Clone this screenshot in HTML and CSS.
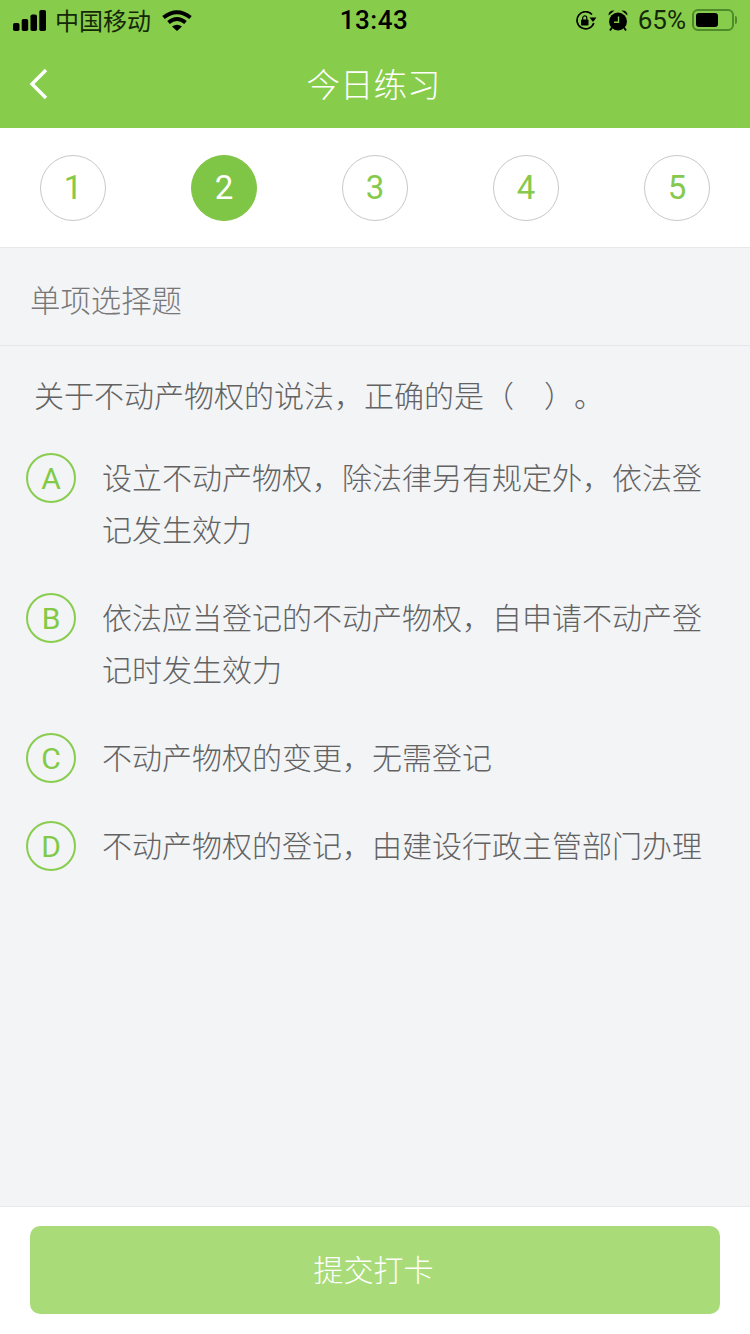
FILE: index.html
```html
<!DOCTYPE html>
<html lang="zh-CN">
<head>
    <meta charset="UTF-8">
    <meta name="viewport" content="width=device-width, initial-scale=1.0">
    <title>今日练习</title>
    <link rel="stylesheet" href="styles.css">
</head>
<body>
    <header class="top">
        <div class="status-bar">
            <div class="status-left">
                <svg class="signal" width="33" height="21" viewBox="0 0 33 21">
                    <rect x="0" y="13" width="6.500" height="8" rx="1.800"/>
                    <rect x="8.700" y="9" width="6.500" height="12" rx="1.800"/>
                    <rect x="17.500" y="4.500" width="6.500" height="16.500" rx="1.800"/>
                    <rect x="26.300" y="0" width="6.700" height="21" rx="1.800"/>
                </svg>
                <span class="carrier">中国移动</span>
                <svg class="wifi" width="30" height="21" viewBox="0 0 30 21">
                    <path d="M1.500 7.500 Q15 -3 28.500 7.500" fill="none" stroke="#000" stroke-width="4"/>
                    <path d="M6.500 12.500 Q15 5.500 23.500 12.500" fill="none" stroke="#000" stroke-width="4"/>
                    <path d="M10 16.500 Q15 13 20 16.500 L15 21 Z"/>
                </svg>
            </div>
            <div class="status-time">13:43</div>
            <div class="status-right">
                <svg class="lock" width="22" height="20" viewBox="0 0 22 20">
                    <path d="M17 3.500 A8.600 8.600 0 1 0 18.800 12" fill="none" stroke="#000" stroke-width="1.700"/>
                    <path d="M14.500 6.500 L21.500 6.500 L18 11 Z"/>
                    <rect x="6" y="8.500" width="7.500" height="6" rx="1"/>
                    <path d="M7.700 9 V7 A2 2 0 0 1 11.800 7 V9" fill="none" stroke="#000" stroke-width="1.200"/>
                </svg>
                <svg class="alarm" width="20" height="21" viewBox="0 0 20 21">
                    <circle cx="10" cy="11.500" r="9"/>
                    <path d="M0.500 5.500 Q0.500 0.200 6.500 0.500 Z M19.500 5.500 Q19.500 0.200 13.500 0.500 Z"/>
                    <path d="M4 17.500 L2 20.500 M16 17.500 L18 20.500" stroke="#000" stroke-width="1.800"/>
                    <path d="M10.500 6.500 V12.300 H6" fill="none" stroke="#87cd4b" stroke-width="1.400"/>
                </svg>
                <span class="percent">65%</span>
                <div class="battery">
                    <div class="battery-level"></div>
                </div>
                <div class="battery-cap"></div>
            </div>
        </div>
        <div class="nav">
            <svg class="back" width="20" height="32" viewBox="0 0 20 32">
                <path d="M17 2 L3 16 L17 30" fill="none" stroke="#fff" stroke-width="3.400"/>
            </svg>
            <h1>今日练习</h1>
        </div>
    </header>

    <div class="steps">
        <div class="step">1</div>
        <div class="step active">2</div>
        <div class="step">3</div>
        <div class="step">4</div>
        <div class="step">5</div>
    </div>

    <main class="content">
        <div class="section-title">单项选择题</div>
        <p class="question">关于不动产物权的说法，正确的是（　）。</p>
        <div class="options">
            <div class="option">
                <div class="letter">A</div>
                <div class="option-text">设立不动产物权，除法律另有规定外，依法登记发生效力</div>
            </div>
            <div class="option">
                <div class="letter">B</div>
                <div class="option-text">依法应当登记的不动产物权，自申请不动产登记时发生效力</div>
            </div>
            <div class="option">
                <div class="letter">C</div>
                <div class="option-text">不动产物权的变更，无需登记</div>
            </div>
            <div class="option">
                <div class="letter">D</div>
                <div class="option-text">不动产物权的登记，由建设行政主管部门办理</div>
            </div>
        </div>
    </main>

    <footer class="bottom">
        <button class="submit">提交打卡</button>
    </footer>
</body>
</html>
```

FILE: styles.css
```css
* {
    box-sizing: border-box;
}
html, body {
    height: 100%;
}
body {
    margin: 0;
    display: flex;
    flex-direction: column;
    min-height: 1334px;
    font-family: "Noto Sans CJK SC", "Liberation Sans", sans-serif;
    font-weight: 300;
    background-color: #f3f4f6;
    color: #626262;
}

/* green header */
.top {
    background-color: #87cd4b;
}
.status-bar {
    height: 40px;
    display: grid;
    grid-template-columns: 1fr auto 1fr;
    align-items: center;
    padding: 0 13px 0 13px;
    color: #000;
    font-weight: 400;
}
.status-left, .status-right {
    display: flex;
    align-items: center;
}
.status-right {
    justify-content: flex-end;
}
.carrier {
    font-size: 24px;
    line-height: 40px;
    margin-left: 9px;
    color: #142808;
}
.wifi {
    margin-left: 11px;
    margin-top: 1px;
}
.status-time {
    font-family: Roboto, sans-serif;
    font-weight: 500;
    font-size: 26px;
    letter-spacing: 0.500px;
    padding-right: 2px;
}
.lock {
    margin-right: 11px;
    margin-top: 2px;
}
.alarm {
    margin-right: 10px;
}
.percent {
    font-family: Roboto, sans-serif;
    font-size: 26px;
    margin-right: 6px;
    color: #142808;
}
.battery {
    width: 42px;
    height: 22px;
    border: 2px solid #4f8a2b;
    border-radius: 6px;
    padding: 2px;
}
.battery-level {
    width: 66%;
    height: 100%;
    background-color: #000;
    border-radius: 3px;
}
.battery-cap {
    width: 2px;
    height: 8px;
    margin-left: 1px;
    background-color: #4f8a2b;
    border-radius: 0 2px 2px 0;
}
.nav {
    height: 88px;
    display: flex;
    align-items: center;
    justify-content: center;
    position: relative;
}
.nav h1 {
    margin: 0 3px 0 0;
    padding-bottom: 4px;
    font-size: 33.500px;
    font-weight: 300;
    color: #fff;
}
.back {
    position: absolute;
    left: 29px;
    top: 28px;
}

/* question number row */
.steps {
    height: 120px;
    padding: 0 40px;
    display: flex;
    align-items: center;
    justify-content: space-between;
    background-color: #fff;
    border-bottom: 1px solid #e8e8e8;
}
.step {
    width: 66px;
    height: 66px;
    border: 1px solid #c8c8c8;
    border-radius: 50%;
    display: flex;
    align-items: center;
    justify-content: center;
    font-family: Roboto, sans-serif;
    font-weight: 400;
    font-size: 33px;
    color: #86c94d;
}
.step.active {
    background-color: #7fc646;
    border-color: #7fc646;
    color: #fff;
}

.content {
    flex: 1;
}
.section-title {
    height: 98px;
    padding: 4px 0 0 30px;
    display: flex;
    align-items: center;
    font-size: 30.400px;
    color: #777;
    border-bottom: 1px solid #e6e7ea;
}
.question {
    margin: 0;
    height: 104px;
    padding: 22px 0 0 34px;
    font-size: 30px;
    line-height: 52px;
    text-spacing-trim: space-all;
}
.options {
    display: flex;
    flex-direction: column;
    gap: 36px;
    padding: 0 26px;
}
.option {
    display: flex;
    align-items: flex-start;
    gap: 26px;
}
.letter {
    flex: none;
    width: 50px;
    height: 50px;
    margin: 3px 0 -1px;
    padding-top: 1px;
    border: 2px solid #88cd4e;
    border-radius: 50%;
    display: flex;
    align-items: center;
    justify-content: center;
    font-family: Roboto, sans-serif;
    font-weight: 400;
    font-size: 30px;
    color: #82ca45;
}
.option-text {
    font-size: 30px;
    line-height: 52px;
}

.bottom {
    height: 128px;
    padding: 19px 30px 0;
    background-color: #fff;
    border-top: 1px solid #e8e9ec;
}
.submit {
    width: 100%;
    height: 88px;
    padding: 0 3px 4px 0;
    border: none;
    border-radius: 10px;
    background-color: #a9dc78;
    color: #fff;
    font-family: inherit;
    font-weight: 300;
    font-size: 30px;
}
```
